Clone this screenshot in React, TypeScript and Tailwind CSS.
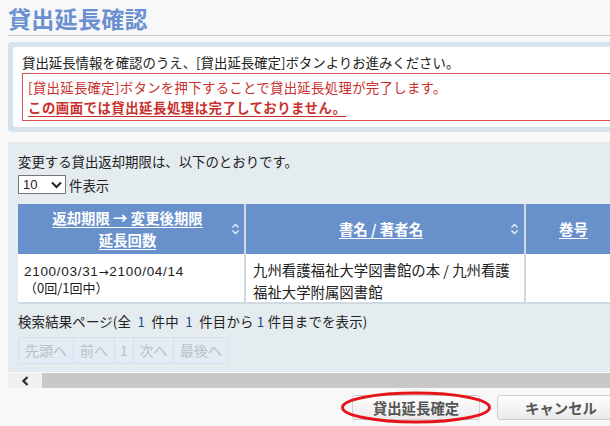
import React from "react";

const jp = { fontFamily: '"Noto Sans CJK JP", "Liberation Sans", sans-serif' };

function SortIcon() {
  return (
    <svg width="9" height="12" viewBox="0 0 9 12" className="shrink-0">
      <path d="M1.5 4.5 L4.5 1.5 L7.5 4.5" stroke="#e8eef8" strokeWidth="1.4" fill="none" />
      <path d="M1.5 7.5 L4.5 10.5 L7.5 7.5" stroke="#e8eef8" strokeWidth="1.4" fill="none" />
    </svg>
  );
}

export default function App() {
  const pages = [
    { label: "先頭へ", w: "w-[56px]" },
    { label: "前へ", w: "w-[42px]" },
    { label: "1", w: "w-[20px]" },
    { label: "次へ", w: "w-[41px]" },
    { label: "最後へ", w: "w-[56px]" },
  ];

  return (
    <div className="w-[610px] h-[426px] overflow-hidden bg-[#f8f8f8] text-[#222]" style={jp}>
      <div className="w-[700px] pl-[8px]">
        {/* title */}
        <h1 className="pt-[3px] h-[36px] border-b border-[#c8c8c8] text-[23px] leading-[30px] font-bold text-[#6a90d2] tracking-[0.3px]">
          貸出延長確認
        </h1>

        {/* notice box */}
        <div className="mt-[6px] rounded-[4px] bg-[#d6e2ec] p-[5px]">
          <div className="rounded-[3px] bg-white pl-[9px] pt-[6px] pb-[6px] text-[13.4px]">
            <p className="leading-[18px]">
              貸出延長情報を確認のうえ、[貸出延長確定]ボタンよりお進みください。
            </p>
            <div className="mt-[2px] border border-[#d9534f] pl-[5px] py-[3px] text-[#c9302c]">
              <p className="leading-[20px] tracking-[0.3px]">
                [貸出延長確定]ボタンを押下することで貸出延長処理が完了します。
              </p>
              <p className="leading-[20px] font-bold underline underline-offset-[3px] tracking-[0.5px]">
                この画面では貸出延長処理は完了しておりません。
              </p>
            </div>
          </div>
        </div>

        {/* list section */}
        <div className="mt-[10px] bg-[#e4ecf0] pl-[10px] pt-[10px] h-[230px] text-[13.4px]">
          <p className="leading-[18px]">変更する貸出返却期限は、以下のとおりです。</p>
          <div className="mt-[5px] flex items-center gap-[3px]">
            <div className="w-[48px] h-[19px] border border-[#767676] bg-white flex items-center justify-between pl-[4px] pr-[3px] text-[13px]" style={{ fontFamily: '"Liberation Sans", sans-serif' }}>
              <span>10</span>
              <svg width="11" height="8" viewBox="0 0 11 8">
                <path d="M1 1.5 L5.5 6 L10 1.5" stroke="#222" strokeWidth="2" fill="none" />
              </svg>
            </div>
            <span className="leading-[18px]">件表示</span>
          </div>

          {/* table */}
          <div className="mt-[10px] flex flex-col">
            <div className="flex h-[50px] bg-[#6891cb] text-white font-bold text-[14.4px]">
              <div className="w-[228px] flex items-center pl-[6px] pr-[4px] border-r-2 border-[#d0d8e0]">
                <div className="flex-1 text-center leading-[22px]">
                  <div className="underline underline-offset-[3px]">返却期限 → 変更後期限</div>
                  <div className="underline underline-offset-[3px]">延長回数</div>
                </div>
                <SortIcon />
              </div>
              <div className="w-[280px] flex items-center pl-[6px] pr-[5px] border-r-2 border-[#d0d8e0]">
                <div className="flex-1 text-center underline underline-offset-[3px]">書名 / 著者名</div>
                <SortIcon />
              </div>
              <div className="w-[80px] flex items-center pl-[33px]">
                <span className="underline underline-offset-[3px]">巻号</span>
              </div>
            </div>
            <div className="flex h-[50px] bg-white border-b-2 border-[#d0d8e0]">
              <div className="w-[228px] pl-[6px] pt-[10px] border-r-2 border-[#d0d8e0] text-[13px] leading-[16px]">
                <div className="tracking-[0.7px]" style={{ fontFamily: '"Liberation Sans", sans-serif', fontSize: "13.5px" }}>
                  2100/03/31<span style={{ fontFamily: '"DejaVu Sans", sans-serif', fontSize: "12px" }}>→</span>2100/04/14
                </div>
                <div>（0回/1回中）</div>
              </div>
              <div className="w-[280px] pl-[7px] pr-[2px] pt-[5px] border-r-2 border-[#d0d8e0] text-[14.4px] leading-[22px]">
                九州看護福祉大学図書館の本 / 九州看護 福祉大学附属図書館
              </div>
              <div className="w-[80px]" />
            </div>
          </div>

          <p className="mt-[8px] leading-[18px] tracking-[0.2px]">
            検索結果ページ(全 <span className="text-[#234a8c]">&nbsp;1&nbsp;</span> 件中{" "}
            <span className="text-[#234a8c]">&nbsp;1&nbsp;</span> 件目から{" "}
            <span className="text-[#234a8c]">1</span> 件目までを表示)
          </p>

          <div className="mt-[7px] flex h-[27px] text-[14px] text-[#b8c0c8]">
            {pages.map((p) => (
              <div
                key={p.label}
                className={`${p.w} flex items-center justify-center border border-[#d4e2ee] bg-[#e2ecf4] -ml-px first:ml-0`}
              >
                {p.label}
              </div>
            ))}
          </div>
        </div>

        {/* horizontal scrollbar */}
        <div className="mt-[1px] h-[15px] flex bg-[#f0f0f0]">
          <div className="w-[34px] flex items-center justify-center">
            <svg width="9" height="10" viewBox="0 0 9 10">
              <path d="M6.5 1 L2.5 5 L6.5 9" stroke="#333" strokeWidth="2.4" fill="none" />
            </svg>
          </div>
          <div className="flex-1 bg-[#c8c8c8]" />
        </div>

        {/* action buttons */}
        <div className="mt-[7px] flex pl-[344px] gap-[17px] text-[14.4px] font-bold text-[#555]">
          <div className="relative">
            <button className="w-[128px] h-[25px] rounded-[3px] border border-[#cfcfcf] bg-gradient-to-b from-white to-[#eaeaea] leading-[22px]">
              貸出延長確定
            </button>
            <svg className="absolute left-[-12px] top-[-4px]" width="152" height="33" viewBox="0 0 152 33">
              <ellipse cx="76" cy="16.5" rx="73.5" ry="14.5" stroke="#e3141a" strokeWidth="3" fill="none" />
            </svg>
          </div>
          <button className="w-[128px] h-[25px] rounded-[3px] border border-[#cfcfcf] bg-gradient-to-b from-white to-[#eaeaea] leading-[22px]">
            キャンセル
          </button>
        </div>
      </div>
    </div>
  );
}
